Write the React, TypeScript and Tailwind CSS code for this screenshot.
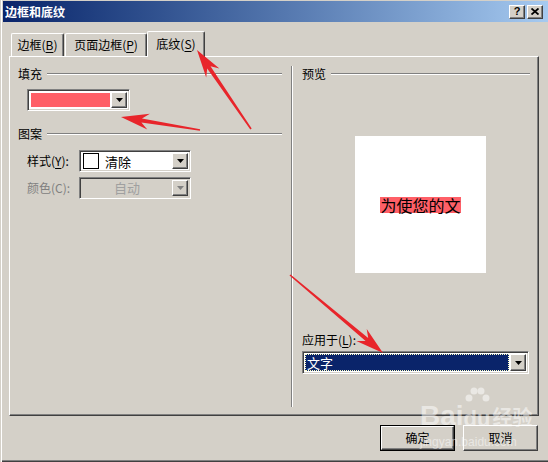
import React from "react";

const raised =
	"bg-[#d4d0c8] border border-t-white border-l-white border-r-[#404040] border-b-[#404040] shadow-[inset_-1px_-1px_0_#808080]";
const sunken =
	"border border-t-[#808080] border-l-[#808080] border-r-white border-b-white shadow-[inset_1px_1px_0_#404040,inset_-1px_-1px_0_#d4d0c8]";

const DropArrow = ({ disabled = false }: { disabled?: boolean }) => (
	<div className={`flex h-full w-[16px] shrink-0 items-center justify-center ${raised}`}>
		<svg width="7" height="4" viewBox="0 0 7 4">
			<path d="M0 0h7L3.5 4z" fill={disabled ? "#808080" : "#000"} />
		</svg>
	</div>
);

const GroupHeader = ({ label }: { label: string }) => (
	<div className="flex h-[14px] items-center">
		<span className="leading-[14px]">{label}</span>
		<div className="ml-[5px] h-[2px] flex-1 border-t border-t-[#808080] border-b border-b-white" />
	</div>
);

const Mnemonic = ({ children }: { children: React.ReactNode }) => (
	<span className="underline underline-offset-2">{children}</span>
);

type Arrow = { tx: number; ty: number; px: number; py: number };

const arrows: Arrow[] = [
	{ tx: 251, ty: 129, px: 197, py: 50 },
	{ tx: 200, ty: 130, px: 121, py: 117 },
	{ tx: 290, ty: 275, px: 383, py: 353 },
];

const arrowPoints = ({ tx, ty, px, py }: Arrow) => {
	const dx = px - tx;
	const dy = py - ty;
	const len = Math.hypot(dx, dy);
	const ux = dx / len;
	const uy = dy / len;
	const nx = -uy;
	const ny = ux;
	const L = 28;
	const W = 8;
	const bx = px - ux * L;
	const by = py - uy * L;
	const kx = px - ux * (L - 7);
	const ky = py - uy * (L - 7);
	const pts = [
		[tx + nx * 0.8, ty + ny * 0.8],
		[kx + nx * 2, ky + ny * 2],
		[bx + nx * W, by + ny * W],
		[px, py],
		[bx - nx * W, by - ny * W],
		[kx - nx * 2, ky - ny * 2],
		[tx - nx * 0.8, ty - ny * 0.8],
	];
	return pts.map((p) => p.map((v) => v.toFixed(1)).join(",")).join(" ");
};

export default function App() {
	return (
		<div className="relative flex h-[462px] w-[548px] flex-col overflow-hidden bg-[#d4d0c8] font-['Noto_Sans_CJK_SC',sans-serif] text-[12px] text-black shadow-[inset_1px_0_0_#d4d0c8,inset_2px_0_0_#fff,inset_0_-1px_0_#404040,inset_0_-2px_0_#808080]">
			{/* title bar */}
			<div className="ml-[3px] mt-[1px] flex h-[21px] items-center bg-linear-to-r from-[#0a246a] to-[#a6caf0] pl-[2px] pr-[5px]">
				<span className="flex-1 font-bold leading-[14px] text-white">边框和底纹</span>
				<div className={`flex h-[14px] w-[16px] items-center justify-center ${raised}`}>
					<span className="font-['Liberation_Sans',sans-serif] text-[11px] font-bold leading-none">?</span>
				</div>
				<div className={`ml-[2px] flex h-[14px] w-[16px] items-center justify-center ${raised}`}>
					<svg width="8" height="7" viewBox="0 0 8 7">
						<path d="M0.5 0.5l7 6M7.5 0.5l-7 6" stroke="#000" strokeWidth="1.8" />
					</svg>
				</div>
			</div>

			{/* tabs */}
			<div className="relative z-10 ml-[11px] mt-[9px] flex h-[25px] items-end">
				<div className="flex h-[23px] w-[53px] items-center justify-center rounded-t-[2px] border-l border-t border-l-white border-t-white border-r border-r-[#404040] shadow-[inset_-1px_0_0_#808080]">
					边框(<Mnemonic>B</Mnemonic>)
				</div>
				<div className="ml-[1px] flex h-[23px] w-[82px] items-center justify-center rounded-t-[2px] border-l border-t border-l-white border-t-white border-r border-r-[#404040] shadow-[inset_-1px_0_0_#808080]">
					页面边框(<Mnemonic>P</Mnemonic>)
				</div>
				<div className="-mb-[1px] flex h-[26px] w-[58px] items-start justify-center rounded-t-[2px] border-l border-t border-l-white border-t-white border-r border-r-[#404040] bg-[#d4d0c8] pt-[3px] shadow-[inset_-1px_0_0_#808080]">
					底纹(<Mnemonic>S</Mnemonic>)
				</div>
			</div>

			{/* tab panel */}
			<div className="ml-[9px] flex h-[360px] w-[530px] border-l border-t border-l-white border-t-white border-r border-b border-r-[#404040] border-b-[#404040] shadow-[inset_-1px_-1px_0_#808080]">
				{/* left column */}
				<div className="ml-[8px] flex w-[264px] flex-col">
					<div className="mt-[10px]">
						<GroupHeader label="填充" />
					</div>
					<div className={`ml-[9px] mt-[8px] flex h-[22px] w-[103px] items-stretch bg-white p-[2px] ${sunken}`}>
						<div className="m-[1px] flex-1 bg-[#ff5f67]" />
						<DropArrow />
					</div>
					<div className="mt-[16px]">
						<GroupHeader label="图案" />
					</div>
					<div className="ml-[9px] mt-[9px] flex items-center">
						<span className="w-[52px] leading-[14px]">
							样式(<Mnemonic>Y</Mnemonic>):
						</span>
						<div className={`flex h-[22px] w-[112px] items-stretch bg-white p-[2px] ${sunken}`}>
							<div className="flex flex-1 items-center">
								<div className="ml-[1px] h-[16px] w-[16px] border border-black" />
								<span className="ml-[6px] text-[13px] leading-none">清除</span>
							</div>
							<DropArrow />
						</div>
					</div>
					<div className="ml-[9px] mt-[5px] flex items-center">
						<span className="w-[52px] leading-[14px] text-[#808080]">颜色(C):</span>
						<div className={`flex h-[22px] w-[112px] items-stretch bg-[#d4d0c8] p-[2px] ${sunken}`}>
							<div className="flex flex-1 items-center justify-center text-[13px] text-[#a0a0a0]">自动</div>
							<DropArrow disabled />
						</div>
					</div>
				</div>

				{/* divider */}
				<div className="ml-[9px] mt-[9px] h-[341px] w-[2px] border-l border-l-[#808080] border-r border-r-white" />

				{/* right column */}
				<div className="ml-[8px] flex w-[229px] flex-col">
					<div className="mt-[10px] pl-[1px]">
						<GroupHeader label="预览" />
					</div>
					<div className="ml-[54px] mt-[55px] flex h-[137px] w-[131px] items-center justify-center bg-white">
						<span className="bg-[#ff5f67] text-[16px] leading-[16px]">为使您的文</span>
					</div>
					<span className="ml-[1px] mt-[60px] leading-[14px]">
						应用于(<Mnemonic>L</Mnemonic>):
					</span>
					<div className={`ml-[1px] mt-[4px] flex h-[23px] w-[227px] items-stretch bg-white p-[2px] ${sunken}`}>
						<div className="mr-[1px] flex flex-1 items-center bg-[#0a246a] pl-[2px] text-[13px] text-white outline-1 -outline-offset-1 outline-dotted outline-[#ffffc0]">
							文字
						</div>
						<DropArrow />
					</div>
				</div>
			</div>

			{/* buttons */}
			<div className="mr-[10px] mt-[9px] flex justify-end gap-[8px]">
				<div className="h-[26px] w-[75px] border border-black">
					<div className={`flex h-full w-full items-center justify-center ${raised}`}>确定</div>
				</div>
				<div className={`flex h-[26px] w-[75px] items-center justify-center ${raised}`}>取消</div>
			</div>

			{/* watermark */}
			<div className="pointer-events-none absolute left-[420px] top-[386px] flex flex-col text-white/50">
				<div className="flex items-end">
					<span className="font-['Liberation_Sans',sans-serif] text-[28px] font-bold leading-[28px]">Bai</span>
					<div className="relative flex flex-col items-center">
						<svg width="26" height="24" viewBox="0 0 26 24" className="mb-[-2px]">
							<circle cx="5" cy="12" r="3.5" fill="currentColor" />
							<circle cx="10" cy="5" r="3.5" fill="currentColor" />
							<circle cx="17" cy="5" r="3.5" fill="currentColor" />
							<circle cx="22" cy="12" r="3.5" fill="currentColor" />
						</svg>
						<span className="font-['Liberation_Sans',sans-serif] text-[22px] font-bold leading-[22px]">du</span>
					</div>
					<span className="ml-[2px] text-[20px] font-bold leading-[26px]">经验</span>
				</div>
				<span className="mt-[6px] font-['Liberation_Sans',sans-serif] text-[12px] leading-[12px]">jingyan.baidu.com</span>
			</div>

			{/* annotation arrows */}
			<svg className="pointer-events-none absolute left-0 top-0 z-20" width="548" height="462">
				{arrows.map((a, i) => (
					<polygon key={i} points={arrowPoints(a)} fill="#e8252b" />
				))}
			</svg>
		</div>
	);
}
